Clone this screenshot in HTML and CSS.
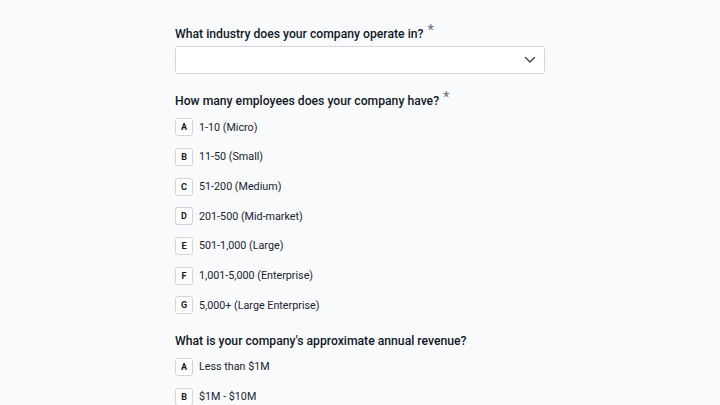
FILE: index.html
```html
<!DOCTYPE html>
<html>
<head>
<meta charset="utf-8">
<link rel="stylesheet" href="styles.css">
</head>
<body>
<div class="form">
  <div class="question">
    <div class="label">What industry does your company operate in? <span class="req">*</span></div>
    <div class="select">
      <svg class="chev" width="12" height="8" viewBox="0 0 12 8"><path d="M1.5 1.5 L6 6 L10.5 1.5" fill="none" stroke="#374151" stroke-width="1.4" stroke-linecap="round" stroke-linejoin="round"/></svg>
    </div>
  </div>
  <div class="question">
    <div class="label">How many employees does your company have? <span class="req">*</span></div>
    <div class="options">
      <div class="opt"><span class="key">A</span><span class="txt">1-10 (Micro)</span></div>
      <div class="opt"><span class="key">B</span><span class="txt">11-50 (Small)</span></div>
      <div class="opt"><span class="key">C</span><span class="txt">51-200 (Medium)</span></div>
      <div class="opt"><span class="key">D</span><span class="txt">201-500 (Mid-market)</span></div>
      <div class="opt"><span class="key">E</span><span class="txt">501-1,000 (Large)</span></div>
      <div class="opt"><span class="key">F</span><span class="txt">1,001-5,000 (Enterprise)</span></div>
      <div class="opt"><span class="key">G</span><span class="txt">5,000+ (Large Enterprise)</span></div>
    </div>
  </div>
  <div class="question">
    <div class="label">What is your company's approximate annual revenue?</div>
    <div class="options">
      <div class="opt"><span class="key">A</span><span class="txt">Less than $1M</span></div>
      <div class="opt"><span class="key">B</span><span class="txt">$1M - $10M</span></div>
    </div>
  </div>
</div>
</body>
</html>
```
FILE: styles.css
```css
html, body {
  margin: 0;
  padding: 0;
  background: #f9fafb;
  overflow: hidden;
  height: 405px;
}
body {
  font-family: Roboto, "Liberation Sans", sans-serif;
  color: #1f2937;
}
.form {
  width: 370px;
  margin: 0 auto;
  padding-top: 23px;
  display: flex;
  flex-direction: column;
  gap: 16px;
}
.label {
  font-size: 12.2px;
  line-height: 20px;
  font-weight: 500;
  color: #111827;
}
.req {
  color: #6b7280;
  font-size: 15px;
  font-weight: 400;
  position: relative;
  top: -3px;
  margin-left: 1px;
}
.select {
  margin-top: 2px;
  height: 28px;
  box-sizing: border-box;
  border: 1px solid #d1d5db;
  border-radius: 3px;
  background: #ffffff;
  display: flex;
  align-items: center;
  justify-content: flex-end;
  padding-right: 8px;
}
.chev { display: block; }
.options {
  margin-top: 7px;
  display: flex;
  flex-direction: column;
  gap: 11px;
}
.opt {
  display: flex;
  align-items: center;
  gap: 6px;
  height: 18.67px;
}
.key {
  width: 18px;
  height: 18px;
  box-sizing: border-box;
  border: 1px solid #d1d5db;
  border-radius: 3px;
  background: #fff;
  font-size: 9px;
  font-weight: 700;
  color: #111827;
  display: flex;
  align-items: center;
  justify-content: center;
}
.txt {
  font-size: 10.75px;
  color: #1a2230;
}
```
